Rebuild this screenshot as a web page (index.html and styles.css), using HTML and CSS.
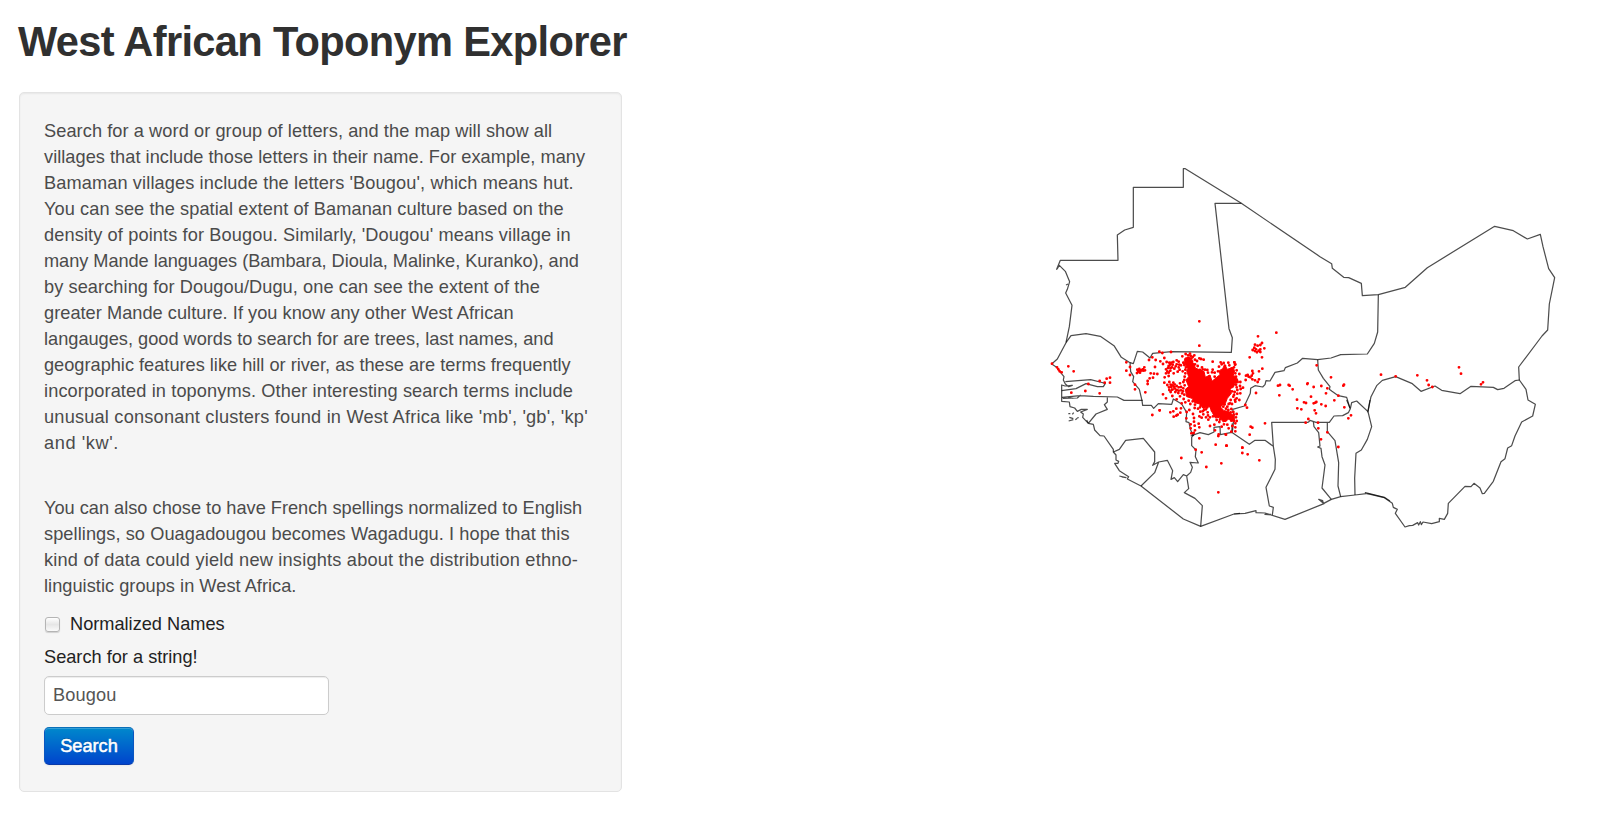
FILE: index.html
```html
<!DOCTYPE html>
<html lang="en">
<head>
<meta charset="utf-8">
<title>West African Toponym Explorer</title>
<link rel="stylesheet" href="styles.css">
</head>
<body>
<h1 class="title">West African Toponym Explorer</h1>
<main class="layout">
<form class="well">
<p class="help"><span class="ls2">Search for a word or group of letters, and the map will show all</span><br><span class="ls1">villages that include those letters in their name. For example, many</span><br><span class="ls3">Bamaman villages include the letters 'Bougou', which means hut.</span><br><span class="ls2">You can see the spatial extent of Bamanan culture based on the</span><br><span class="ls3">density of points for Bougou. Similarly, 'Dougou' means village in</span><br><span class="tight">many Mande languages (Bambara, Dioula, Malinke, Kuranko), and</span><br><span class="ls2">by searching for Dougou/Dugu, one can see the extent of the</span><br><span class="ls1">greater Mande culture. If you know any other West African</span><br>langauges, good words to search for are trees, last names, and<br>geographic features like hill or river, as these are terms frequently<br><span class="ls3">incorporated in toponyms. Other interesting search terms include</span><br><span class="ls4">unusual consonant clusters found in West Africa like 'mb', 'gb', 'kp'</span><br><span class="ls5">and 'kw'.</span></p>
<p class="help">You can also chose to have French spellings normalized to English<br><span class="ls2">spellings, so Ouagadougou becomes Wagadugu. I hope that this</span><br><span class="ls4">kind of data could yield new insights about the distribution ethno-</span><br><span class="ls1">linguistic groups in West Africa.</span></p>
<label class="check"><input type="checkbox" class="box"><span>Normalized Names</span></label>
<label class="label" for="q">Search for a string!</label>
<input id="q" class="field" type="text" value="Bougou">
<button type="button" class="btn">Search</button>
</form>
<svg class="map" viewBox="0 0 1620 1200" role="img" aria-label="Map of matching villages">
<g class="borders">
<path d="M78 578L88 530 96 466 77 429 82 418 89 395 76 364 58 346 50 358 61 331 234 331 232 255 254 240 280 232V112H430V56H436L604 160 840 320 875 341 877 355 911 382 926 383 964 400 967 437 1015 434 1096 412 1162 353 1364 229 1420 242 1462 267 1501 253 1509 290 1526 356 1544 383 1528 462 1523 540 1506 558 1436 651 1438 691M78 405l6-3M52 356l5-10"/>
<path d="M604 160H525L567 536 577 563 574 607 395 605 338 610 330 624 308 606 292 604 280 641 270 638"/>
<path d="M1015 434L1013 546 1003 580 982 612 902 614 873 624 833 629 788 625 772 639 736 653 732 662 705 667 690 693 678 692 675 704 668 711 645 707 632 715 631 730 613 768 578 778 582 800 577 847"/>
<g transform="translate(0 480)">
<path d="M78 98L93 77 138 71 181 79 222 107 244 142 270 158 272 185 281 200 278 215 298 238 306 272 308 286H334L341 295 355 281 395 283 400 267 425 282 440 307 438 335 447 338 452 360 460 378"/>
<path d="M78 98L52 147 35 162 52 173 62 188 72 200 70 210 76 222 86 230 97 226 75 228 65 225V274L88 276 90 290 104 294 112 304 124 298 142 298 122 306 130 312 128 322 145 340"/>
<path d="M76 215L152 209 180 216 196 220 190 230 172 230 138 221 108 236 65 242M66 262L120 257 160 259 232 261 252 271H308M68 265L112 264 122 255M84 262L100 265M202 260V276L193 284 202 298 168 312 145 340"/>
<path d="M85 311h6M97 313l4-5M112 323h4M88 322l12 4M86 333l14-4M106 329l6-4"/>
</g>
<g transform="translate(0 690)">
<path d="M145 130L140 120M145 130L160 133 164 150 180 167 192 168 220 208 220 216 228 225 228 240 236 244 234 250 224 250 238 272 266 290 262 297 303 318 430 417 482 439 582 402 600 400M238 288L258 293 245 291"/>
<path d="M220 216L238 208 257 181 310 175 344 216V245L338 256 356 246 382 241 398 272 393 298 403 293 413 305 430 284 440 288 452 277 457 262 450 247 475 249 466 230 468 210 455 197V172L462 163M303 318L344 278 356 246M440 288L446 326 433 338 465 355 487 377 482 439"/>
</g>
<g transform="translate(450 750)">
<path d="M2 108L30 98 55 104 72 96V82L90 80 91 104 125 97 127 70M125 97L178 133 195 121H225L250 139M355 67H245L250 139 256 178 255 208 228 262 238 318 250 322 247 345 225 343 243 343M132 342L165 340 198 332V338L225 339 285 358 402 311 386 298 398 302 400 311 424 298 452 290 495 285 535 280 526 278 583 292 600 303"/>
<path d="M355 67L360 61 378 67H418L432 48 458 47 475 38 481 26 470 0M370 65L372 80 386 98 390 138 383 141 393 145 396 170 405 195 396 264 424 298M412 68V95L435 122 446 188 444 258 452 290M495 285L494 235 498 160 514 150 532 118 545 80 534 35 500 3 485 8 481 26M534 35L540 0"/>
</g>
<path d="M833 629L835 660 850 685 870 710 868 718 876 724 895 737 920 742 930 775"/>
<path transform="translate(930 600)" d="M53 187L63 140 80 107 97 91 137 80 187 101 213 124 255 108 275 121 330 131 363 109 430 112 443 119 462 115 495 92 508 90 528 118 534 150 556 163 548 198 515 216 495 258 485 287 473 294 465 326 453 335 430 394 403 430 397 431 390 414 372 400 363 410 345 409 295 460 293 490 283 508 268 505V515L245 521 219 516 214 524 211 515 206 525 203 518 188 526 178 527 165 531 136 490 142 478 130 472 127 460 103 443 52 431"/>
</g>
<g class="points">
<path class="dense" transform="translate(240 540)" d="M196 84L206 82 222 102 226 114 240 120 252 124 256 142 270 135 276 154 290 142 300 134 298 122 308 116 314 104 322 118 338 112 344 122 340 135 352 146 356 158 345 160 340 172 330 176 334 190 322 205 316 220 300 230 312 242 325 244 342 258 344 276 326 268 310 276 298 262 286 264 276 246 268 228 250 236 240 222 224 218 216 205 200 200 196 178 206 170 198 150 206 140 200 122 204 114 192 100Z"/>
<path d="M478 514h0M478 587h0M709 548h0M654 559h0"/>
<path transform="translate(0 480)" d="M36 161h0M51 172h0M55 178h0M59 184h0M65 187h0M85 169h0M101 184h0M94 248h0M136 243h0M179 250h0M179 213h0M145 222h0M194 218h0M200 206h0M210 203h0M210 218h0M259 157h0M259 182h0M270 171h0M270 195h0M285 224h0M285 238h0M316 247h0M337 315h0M359 301h0"/>
<path transform="translate(240 540)" d="M118 65h0M127 69h0M153 66h0M97 82h0M107 90h0M87 90h0M121 94h0M133 84h0M129 102h0M140 96h0M138 118h0M146 108h0M150 104h0M156 112h0M158 104h0M163 116h0M167 109h0M176 112h0M183 106h0M190 98h0M170 91h0M176 95h0M187 79h0M197 72h0M210 71h0M218 81h0M223 76h0M225 89h0M231 93h0M238 85h0M243 87h0M251 89h0M278 95h0M302 97h0M311 99h0M325 98h0M343 97h0M345 104h0M52 119h0M58 117h0M63 122h0M55 124h0M51 129h0M68 118h0M73 112h0M60 128h0M70 122h0M75 121h0M105 111h0M102 131h0M112 132h0M92 130h0M89 145h0M83 153h0M83 162h0M99 143h0M138 130h0M146 138h0M134 142h0M146 128h0M151 122h0M161 130h0M173 125h0M179 119h0M188 124h0M196 119h0M148 156h0M160 158h0M133 158h0M142 165h0M147 172h0M154 171h0M157 179h0M164 175h0M164 163h0M170 180h0M176 172h0M183 181h0M166 186h0M148 180h0M152 186h0M175 189h0M190 156h0M180 160h0M183 171h0M186 190h0M129 193h0M157 198h0M170 208h0M138 205h0M180 199h0M191 207h0M196 217h0M185 220h0M183 235h0M169 236h0M160 244h0M151 247h0M119 241h0M169 257h0M161 260h0M173 254h0M181 248h0M200 246h0M208 240h0M199 265h0M206 212h0M211 222h0M225 224h0M234 236h0M219 252h0M222 264h0M212 283h0M212 295h0M214 310h0M222 275h0M224 287h0M238 292h0M236 281h0M225 301h0M221 309h0M238 259h0M245 263h0M250 253h0M258 262h0M265 269h0M270 288h0M283 284h0M285 301h0M296 313h0M318 314h0M334 305h0M346 304h0M346 292h0M337 288h0M326 295h0M305 290h0M312 283h0M241 245h0M252 240h0M263 247h0M279 259h0M276 241h0M290 253h0M301 246h0M310 252h0M325 240h0M332 247h0M342 254h0M350 273h0M322 230h0M314 223h0M336 222h0M334 237h0M345 210h0M350 205h0M358 210h0M352 191h0M361 190h0M362 177h0M352 180h0M369 173h0M360 168h0M361 156h0M350 121h0M358 132h0M346 130h0M297 110h0M294 124h0M284 128h0M278 119h0M276 127h0M262 120h0M255 119h0M246 112h0M233 108h0M225 103h0M240 120h0M305 103h0M315 108h0M328 106h0M335 116h0M200 94h0M206 99h0M193 105h0M198 112h0M199 88h0M206 84h0M190 175h0M189 184h0M193 194h0M332 210h0M300 230h0M310 230h0"/>
<path transform="translate(240 540)" d="M214 86h0M212 78h0M216 94h0M204 76h0M154 98h0M148 98h0M170 103h0M178 104h0M160 96h0M144 114h0M152 114h0M142 124h0M162 170h0M170 168h0M158 166h0M152 164h0M176 182h0M193 150h0M194 140h0M196 130h0M194 166h0M240 232h0M248 244h0M258 238h0M264 256h0M270 262h0M230 212h0M218 214h0M224 234h0M242 226h0M330 220h0M340 200h0M344 186h0M350 172h0M342 195h0M348 164h0M336 184h0M326 222h0M346 215h0M306 258h0M300 268h0M290 270h0M316 272h0M334 272h0M348 262h0M350 252h0M340 246h0M346 280h0M322 284h0M298 276h0M286 236h0M262 232h0M328 256h0M336 262h0M318 236h0M348 140h0M342 112h0M350 152h0M264 128h0M268 140h0M248 118h0M284 140h0"/>
<path transform="translate(540 510)" d="M113 77h0M126 69h0M121 75h0M105 74h0M103 83h0M98 90h0M105 93h0M111 97h0M116 92h0M121 96h0M133 85h0M108 88h0M121 88h0M89 112h0M126 112h0M127 146h0M117 154h0M97 153h0M99 160h0M95 167h0M91 172h0M78 167h0M83 165h0M77 180h0M86 170h0M97 178h0M105 181h0M117 178h0M113 186h0M108 219h0M76 255h0M81 263h0M174 197h0M180 195h0M206 195h0M209 197h0M218 208h0M178 226h0M231 239h0M232 265h0M244 268h0M252 247h0M258 249h0M263 190h0M262 192h0M281 201h0M304 198h0M290 136h0M333 172h0M322 205h0M318 220h0M372 194h0M370 197h0M355 227h0M343 241h0M273 230h0M281 250h0M286 248h0M289 246h0M304 253h0M317 258h0M284 271h0M288 280h0M373 262h0M393 286h0M385 295h0M257 308h0M265 297h0M294 308h0M295 325h0M303 358h0M322 337h0M355 381h0M135 310h0M92 320h0M97 323h0M89 344h0M67 383h0M20 377h0M43 127h0M46 133h0"/>
<path transform="translate(0 690)" d="M424 234h0M478 175h0M467 209h0M485 217h0M499 261h0M535 337h0M544 250h0M527 194h0M559 197h0M535 168h0M557 163h0"/>
<path transform="translate(450 750)" d="M157 143h0M157 159h0M173 163h0M208 181h0"/>
<path transform="translate(930 600)" d="M93 74h0M137 79h0M202 76h0M231 91h0M236 105h0M247 111h0M327 52h0M333 71h0M393 103h0M399 97h0"/>
</g>
</svg>
</main>
</body>
</html>
```
FILE: styles.css
```css
* { box-sizing: border-box; }
body { margin: 0; background: #fff; color: #4b4b4b; font: 18.2px/26px "Liberation Sans", Arial, sans-serif; }
.title { margin: 0; padding: 16px 0 0 18px; height: 92px; color: #303030; font-size: 41.6px; line-height: 52px; font-weight: 700; letter-spacing: -.66px; white-space: nowrap; }
.layout { display: flex; align-items: flex-start; padding: 0 20px 0 19px; justify-content: space-between; }
.well { display: flex; flex-direction: column; align-items: flex-start; width: 603px; height: 700px; padding: 25px 24px; background: #f5f5f5; border: 1px solid #e3e3e3; border-radius: 5px; box-shadow: inset 0 1px 2px rgba(0,0,0,.06); }
.help { margin: 0 0 39px; white-space: nowrap; }
.help + .help { margin-bottom: 12px; }
.tight { letter-spacing: -.05px; }
.ls1 { letter-spacing: .033px; }
.ls2 { letter-spacing: .075px; }
.ls3 { letter-spacing: .115px; }
.ls4 { letter-spacing: .2px; }
.ls5 { letter-spacing: .6px; }
.check { display: flex; align-items: center; gap: 10px; height: 26px; color: #222; }
.box { appearance: none; width: 15px; height: 15px; margin: 1px 0 0 1px; border: 1px solid #b4b4b4; border-radius: 3px; background: linear-gradient(#fff, #e6e6e6 50%, #fafafa); box-shadow: 0 1px 1px rgba(0,0,0,.15); }
.label { margin-top: 7px; color: #222; }
.field { width: 285px; height: 39px; margin: 6px 0 12px; padding: 0 8px; border: 1px solid #ccc; border-radius: 5px; background: #fff; color: #555; font: inherit; letter-spacing: .15px; box-shadow: inset 0 1px 1px rgba(0,0,0,.075); }
.btn { width: 90px; height: 38px; padding: 0; border: 1px solid; border-color: #0a6fb8 #0a56c0 #0a3aa8; border-radius: 5px; background: linear-gradient(#08c, #04c); color: #fff; font: inherit; -webkit-text-stroke: .5px #fff; text-shadow: 0 -1px 0 rgba(0,0,0,.25); box-shadow: inset 0 1px 0 rgba(255,255,255,.2), 0 1px 2px rgba(0,0,0,.05); }
.map { width: 540px; height: 400px; margin-top: 58px; }
.borders { fill: none; stroke: #000; stroke-width: 3.7; stroke-opacity: .7; stroke-linejoin: round; }
.points { fill: none; stroke: #f00; stroke-width: 8.6; stroke-linecap: round; }
.dense { fill: #f00; stroke-width: 3; }
```
